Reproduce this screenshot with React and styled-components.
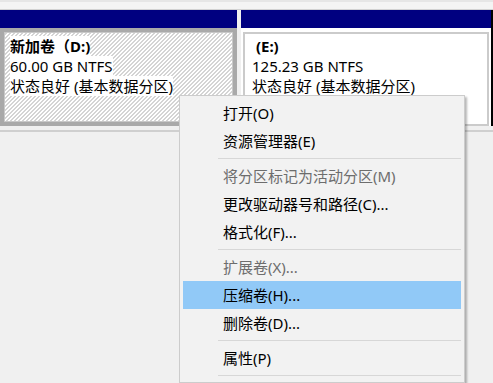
import React from "react";
import styled, { createGlobalStyle } from "styled-components";

const Global = createGlobalStyle`
  html, body { margin: 0; padding: 0; background: #f0f0f0; overflow: hidden; }
  body { font-family: "Noto Sans", "Noto Sans CJK SC", sans-serif; }
  * { box-sizing: border-box; }
`;

const Page = styled.div`
  position: relative;
  width: 493px;
  height: 383px;
  overflow: hidden;
  background: #f0f0f0;
`;

const TopStrip = styled.div`
  height: 10px;
  background: linear-gradient(#e6e6e6 0 2px, #f4f4f4 2px);
  border-bottom: 1px solid #d2d2d2;
`;

const DiskRow = styled.div`
  display: flex;
  gap: 4px;
  height: 116px;
`;

const Volume = styled.div`
  display: flex;
  flex-direction: column;
  width: ${(p) => p.$w}px;
  flex-shrink: 0;
`;

const Header = styled.div`
  height: 18px;
  flex-shrink: 0;
  background: #000080;
`;

const SelectedBody = styled.div`
  flex: 1;
  border: 4px solid #a9a9a9;
  box-shadow: inset 0 0 0 1px #c8c8c8;
  background: repeating-linear-gradient(
    135deg,
    #ffffff 0px,
    #ffffff 1.5px,
    #d4d4d4 1.5px,
    #d4d4d4 2.83px
  );
  padding: 4px 6px;
`;

const PlainBody = styled.div`
  flex: 1;
  display: flex;
  background: #ffffff;
  padding: 4px 2px 0 2px;
`;

const Frame = styled.div`
  flex: 1;
  border: 2px solid #cbcbcb;
  padding: 2px 7px;
`;

const Line = styled.div`
  width: fit-content;
  background: #ffffff;
  font-size: 15px;
  line-height: 20px;
  color: #000;
  white-space: nowrap;
  font-weight: ${(p) => (p.$bold ? 700 : 400)};
`;

const EdgeBar = styled.div`
  width: 2px;
  margin-left: -4px;
  background: #000;
  flex-shrink: 0;
`;

const Divider = styled.div`
  margin-top: 4px;
  height: 2px;
  background: #cfcfcf;
`;

const Menu = styled.div`
  position: absolute;
  left: 179px;
  top: 95px;
  width: 286px;
  border: 1px solid #cccccc;
  background: #f2f2f2;
  padding: 3px;
  box-shadow: 2px 2px 2px rgba(0, 0, 0, 0.28);
  font-size: 15px;
`;

const Item = styled.div`
  height: 28px;
  line-height: 28px;
  padding-left: 40px;
  white-space: nowrap;
  color: ${(p) => (p.$disabled ? "#6d6d6d" : "#000000")};
  background: ${(p) => (p.$active ? "#91c9f7" : "transparent")};
`;

const Separator = styled.div`
  height: 1px;
  margin: 3px 0 3px 35px;
  background: #d7d7d7;
`;

const menu = [
  { t: "打开(O)" },
  { t: "资源管理器(E)" },
  { sep: true },
  { t: "将分区标记为活动分区(M)", disabled: true },
  { t: "更改驱动器号和路径(C)..." },
  { t: "格式化(F)..." },
  { sep: true },
  { t: "扩展卷(X)...", disabled: true },
  { t: "压缩卷(H)...", active: true },
  { t: "删除卷(D)..." },
  { sep: true },
  { t: "属性(P)" },
  { sep: true },
];

export default function App() {
  return (
    <Page>
      <Global />
      <TopStrip />
      <DiskRow>
        <Volume $w={237}>
          <Header />
          <SelectedBody>
            <Line $bold>新加卷（D:)</Line>
            <Line>60.00 GB NTFS</Line>
            <Line>状态良好 (基本数据分区)</Line>
          </SelectedBody>
        </Volume>
        <Volume $w={250}>
          <Header />
          <PlainBody>
            <Frame>
              <Line $bold>{"\u00a0(E:)"}</Line>
              <Line>125.23 GB NTFS</Line>
              <Line>状态良好 (基本数据分区)</Line>
            </Frame>
          </PlainBody>
        </Volume>
        <EdgeBar />
      </DiskRow>
      <Divider />
      <Menu>
        {menu.map((m, i) =>
          m.sep ? (
            <Separator key={i} />
          ) : (
            <Item key={i} $disabled={m.disabled} $active={m.active}>
              {m.t}
            </Item>
          )
        )}
      </Menu>
    </Page>
  );
}
